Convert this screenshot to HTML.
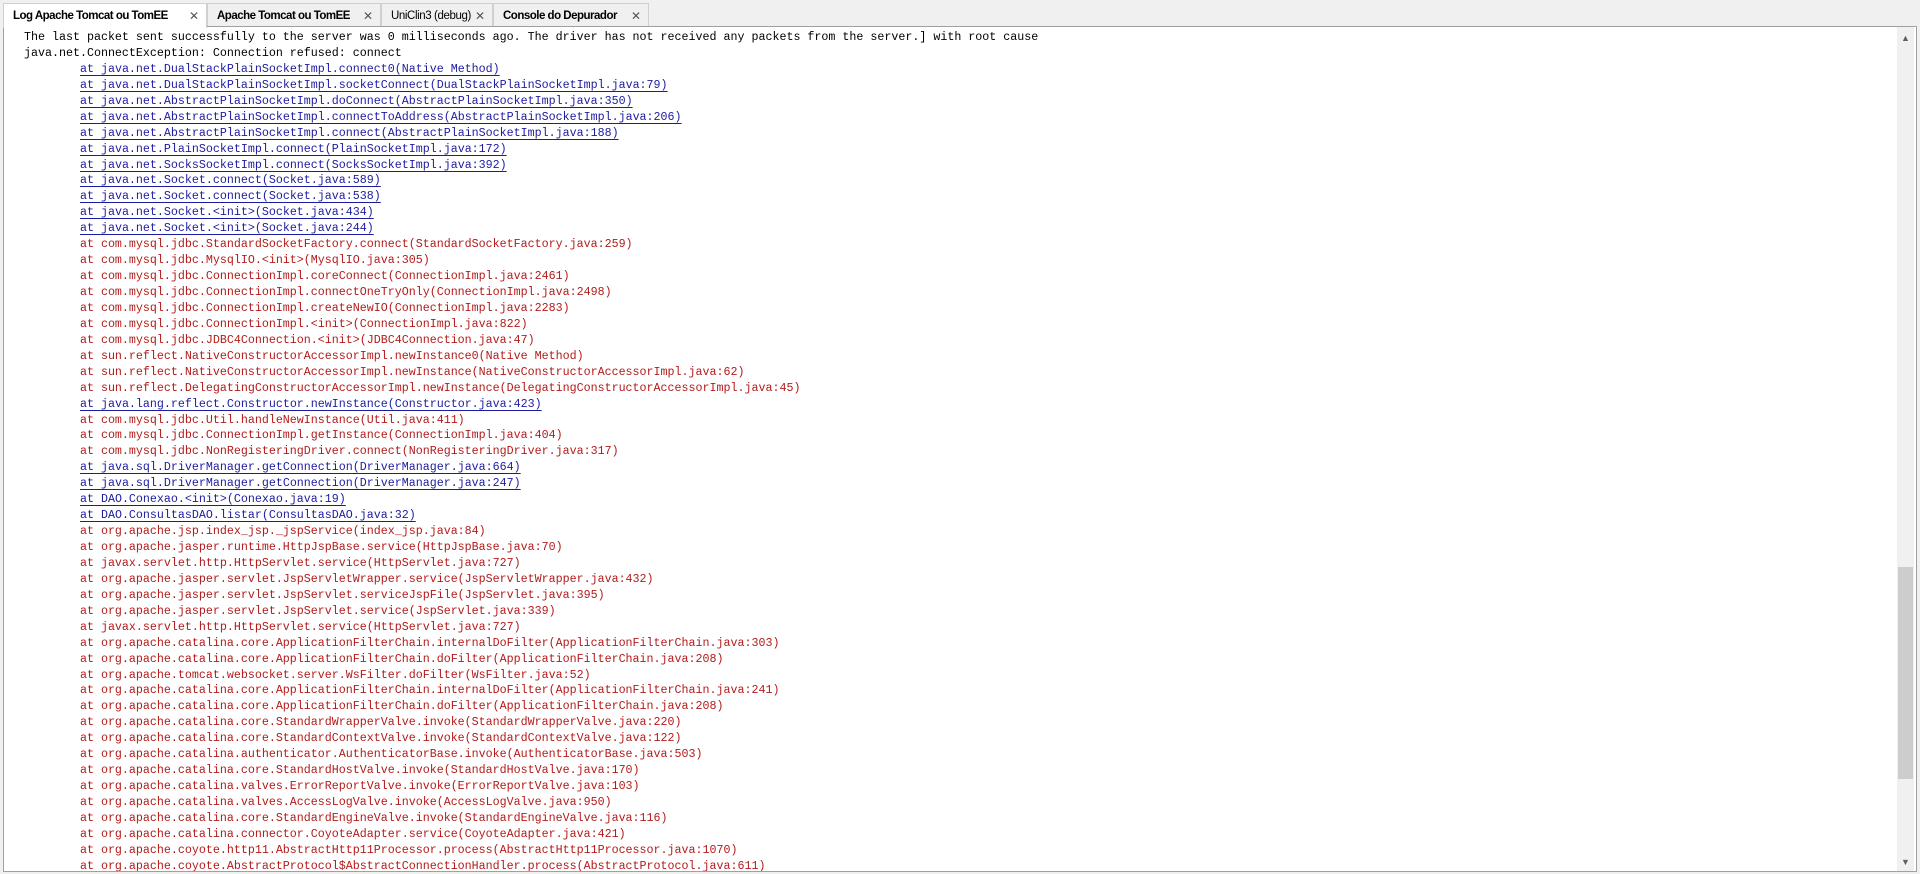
<!DOCTYPE html>
<html><head><meta charset="utf-8"><style>
html,body{margin:0;padding:0;width:1920px;height:874px;overflow:hidden;background:#f0f0f0;}
.tabs{position:absolute;left:0;top:0;width:1920px;height:27px;}
.tab{position:absolute;top:3px;height:24px;box-sizing:border-box;border:1px solid #d0d0d0;border-bottom:none;background:#f0f0f0;font:bold 11.5px "Liberation Sans",sans-serif;letter-spacing:-0.5px;color:#000;line-height:24px;padding-left:9px;white-space:nowrap;}
.tab.n{font-weight:normal;letter-spacing:-0.4px;}
.tab .x{position:absolute;right:7px;top:0;font-weight:normal;color:#555;font-size:12px;letter-spacing:0;}
.tab.a{background:#fff;height:25px;z-index:2;}
.content{position:absolute;left:3px;top:26px;width:1914px;height:846px;box-sizing:border-box;border:1px solid #a0a0a0;background:#fff;overflow:hidden;}
pre{margin:0;position:absolute;left:20px;top:3px;font:11.67px/15.94px "Liberation Mono",monospace;color:#000;}
.b{color:#1c1ca0;text-decoration:underline;text-underline-offset:3px;}
.r{color:#b31b1b;}
.sb{position:absolute;left:1893px;top:0;width:17px;height:846px;background:#f0f0f0;}
.th{position:absolute;left:1px;top:540px;width:15px;height:212px;background:#cdcdcd;}
.ar{position:absolute;left:4px;font:9px "Liberation Sans",sans-serif;color:#606060;}
</style></head><body>
<div class="tabs">
<div class="tab a" style="left:3px;width:204px">Log Apache Tomcat ou TomEE<span class="x">✕</span></div>
<div class="tab" style="left:207px;width:174px">Apache Tomcat ou TomEE<span class="x">✕</span></div>
<div class="tab n" style="left:381px;width:112px">UniClin3 (debug)<span class="x">✕</span></div>
<div class="tab" style="left:493px;width:156px">Console do Depurador<span class="x">✕</span></div>
</div>
<div class="content">
<pre>The last packet sent successfully to the server was 0 milliseconds ago. The driver has not received any packets from the server.] with root cause
java.net.ConnectException: Connection refused: connect
        <span class="b">at java.net.DualStackPlainSocketImpl.connect0(Native Method)</span>
        <span class="b">at java.net.DualStackPlainSocketImpl.socketConnect(DualStackPlainSocketImpl.java:79)</span>
        <span class="b">at java.net.AbstractPlainSocketImpl.doConnect(AbstractPlainSocketImpl.java:350)</span>
        <span class="b">at java.net.AbstractPlainSocketImpl.connectToAddress(AbstractPlainSocketImpl.java:206)</span>
        <span class="b">at java.net.AbstractPlainSocketImpl.connect(AbstractPlainSocketImpl.java:188)</span>
        <span class="b">at java.net.PlainSocketImpl.connect(PlainSocketImpl.java:172)</span>
        <span class="b">at java.net.SocksSocketImpl.connect(SocksSocketImpl.java:392)</span>
        <span class="b">at java.net.Socket.connect(Socket.java:589)</span>
        <span class="b">at java.net.Socket.connect(Socket.java:538)</span>
        <span class="b">at java.net.Socket.&lt;init&gt;(Socket.java:434)</span>
        <span class="b">at java.net.Socket.&lt;init&gt;(Socket.java:244)</span>
<span class="r">        at com.mysql.jdbc.StandardSocketFactory.connect(StandardSocketFactory.java:259)
        at com.mysql.jdbc.MysqlIO.&lt;init&gt;(MysqlIO.java:305)
        at com.mysql.jdbc.ConnectionImpl.coreConnect(ConnectionImpl.java:2461)
        at com.mysql.jdbc.ConnectionImpl.connectOneTryOnly(ConnectionImpl.java:2498)
        at com.mysql.jdbc.ConnectionImpl.createNewIO(ConnectionImpl.java:2283)
        at com.mysql.jdbc.ConnectionImpl.&lt;init&gt;(ConnectionImpl.java:822)
        at com.mysql.jdbc.JDBC4Connection.&lt;init&gt;(JDBC4Connection.java:47)
        at sun.reflect.NativeConstructorAccessorImpl.newInstance0(Native Method)
        at sun.reflect.NativeConstructorAccessorImpl.newInstance(NativeConstructorAccessorImpl.java:62)
        at sun.reflect.DelegatingConstructorAccessorImpl.newInstance(DelegatingConstructorAccessorImpl.java:45)</span>
        <span class="b">at java.lang.reflect.Constructor.newInstance(Constructor.java:423)</span>
<span class="r">        at com.mysql.jdbc.Util.handleNewInstance(Util.java:411)
        at com.mysql.jdbc.ConnectionImpl.getInstance(ConnectionImpl.java:404)
        at com.mysql.jdbc.NonRegisteringDriver.connect(NonRegisteringDriver.java:317)</span>
        <span class="b">at java.sql.DriverManager.getConnection(DriverManager.java:664)</span>
        <span class="b">at java.sql.DriverManager.getConnection(DriverManager.java:247)</span>
        <span class="b">at DAO.Conexao.&lt;init&gt;(Conexao.java:19)</span>
        <span class="b">at DAO.ConsultasDAO.listar(ConsultasDAO.java:32)</span>
<span class="r">        at org.apache.jsp.index_jsp._jspService(index_jsp.java:84)
        at org.apache.jasper.runtime.HttpJspBase.service(HttpJspBase.java:70)
        at javax.servlet.http.HttpServlet.service(HttpServlet.java:727)
        at org.apache.jasper.servlet.JspServletWrapper.service(JspServletWrapper.java:432)
        at org.apache.jasper.servlet.JspServlet.serviceJspFile(JspServlet.java:395)
        at org.apache.jasper.servlet.JspServlet.service(JspServlet.java:339)
        at javax.servlet.http.HttpServlet.service(HttpServlet.java:727)
        at org.apache.catalina.core.ApplicationFilterChain.internalDoFilter(ApplicationFilterChain.java:303)
        at org.apache.catalina.core.ApplicationFilterChain.doFilter(ApplicationFilterChain.java:208)
        at org.apache.tomcat.websocket.server.WsFilter.doFilter(WsFilter.java:52)
        at org.apache.catalina.core.ApplicationFilterChain.internalDoFilter(ApplicationFilterChain.java:241)
        at org.apache.catalina.core.ApplicationFilterChain.doFilter(ApplicationFilterChain.java:208)
        at org.apache.catalina.core.StandardWrapperValve.invoke(StandardWrapperValve.java:220)
        at org.apache.catalina.core.StandardContextValve.invoke(StandardContextValve.java:122)
        at org.apache.catalina.authenticator.AuthenticatorBase.invoke(AuthenticatorBase.java:503)
        at org.apache.catalina.core.StandardHostValve.invoke(StandardHostValve.java:170)
        at org.apache.catalina.valves.ErrorReportValve.invoke(ErrorReportValve.java:103)
        at org.apache.catalina.valves.AccessLogValve.invoke(AccessLogValve.java:950)
        at org.apache.catalina.core.StandardEngineValve.invoke(StandardEngineValve.java:116)
        at org.apache.catalina.connector.CoyoteAdapter.service(CoyoteAdapter.java:421)
        at org.apache.coyote.http11.AbstractHttp11Processor.process(AbstractHttp11Processor.java:1070)
        at org.apache.coyote.AbstractProtocol$AbstractConnectionHandler.process(AbstractProtocol.java:611)</span></pre>
<div class="sb"><div class="ar" style="top:6px">&#9650;</div><div class="th"></div><div class="ar" style="top:830px">&#9660;</div></div>
</div>
</body></html>
